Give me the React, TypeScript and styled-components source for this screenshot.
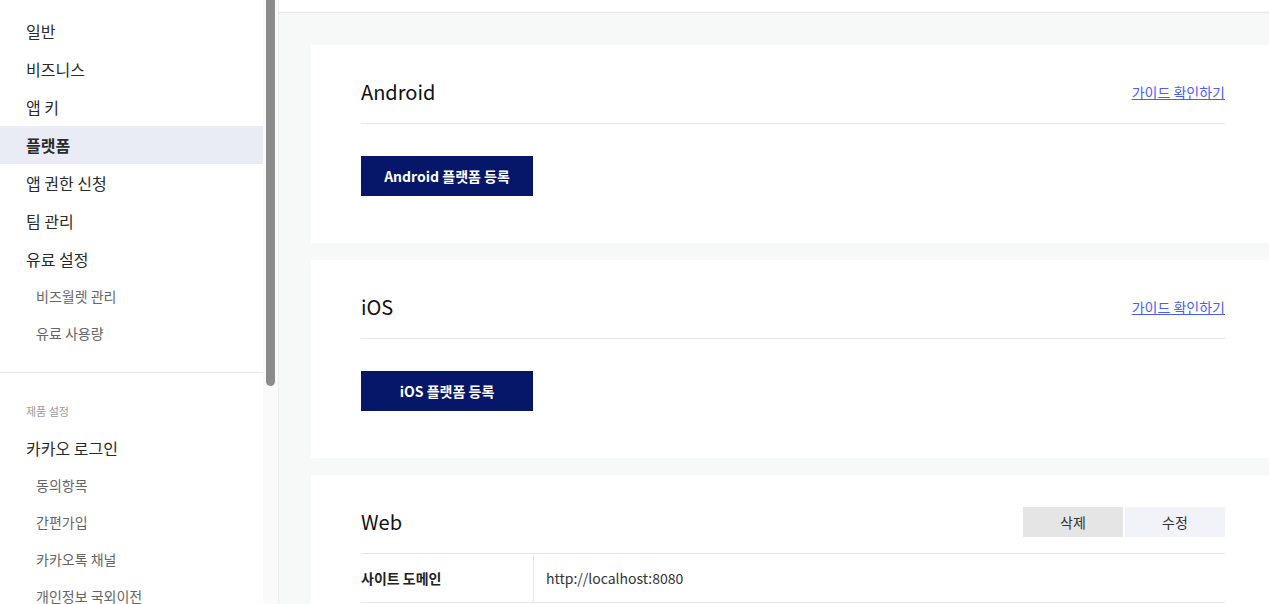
import styled, { createGlobalStyle } from "styled-components";

const GlobalStyle = createGlobalStyle`
  html, body {
    margin: 0;
    padding: 0;
    height: 100%;
    overflow: hidden;
  }
  body {
    font-family: "Noto Sans CJK KR", "Noto Sans", sans-serif;
    color: #222;
    background: #fff;
  }
  * {
    box-sizing: border-box;
  }
`;

const Layout = styled.div`
  display: flex;
  height: 100vh;
  overflow: hidden;
`;

const Sidebar = styled.nav`
  display: flex;
  width: 279px;
  flex-shrink: 0;
  height: 100%;
  overflow: hidden;
  border-right: 1px solid #ececec;
  background: #fff;
`;

const MenuList = styled.div`
  width: 263px;
  flex-shrink: 0;
`;

const ScrollTrack = styled.div`
  width: 15px;
  height: 100%;
  padding: 0 3px;
  background: #fafafa;
`;

const ScrollThumb = styled.div`
  height: 386px;
  background: #8c8c8c;
  border-radius: 0 0 5px 5px;
`;

const MenuGroup = styled.ul`
  list-style: none;
  margin: 0;
  padding: 12px 0 20px;
  border-bottom: 1px solid #e5e5e5;

  &:last-child {
    border-bottom: none;
    padding-top: 27px;
  }
`;

const GroupLabel = styled.li`
  height: 22px;
  line-height: 22px;
  margin-bottom: 7px;
  padding-left: 26px;
  font-size: 11px;
  color: #9a9a9a;
`;

const MenuItem = styled.li<{ $active?: boolean }>`
  height: 38px;
  line-height: 38px;
  padding-left: 26px;
  font-size: 16px;
  color: #2a2a2a;
  font-weight: ${(p) => (p.$active ? 700 : 400)};
  background: ${(p) => (p.$active ? "#e9ecf4" : "transparent")};
`;

const SubItem = styled.li`
  height: 37px;
  line-height: 37px;
  padding-left: 36px;
  font-size: 14px;
  color: #666;
`;

const Main = styled.main`
  flex: 1;
  height: 100%;
  overflow: hidden;
  background: #f7f8f8;
`;

const TopBar = styled.div`
  height: 13px;
  background: #fff;
  border-bottom: 1px solid #e5e5e5;
`;

const Content = styled.div`
  display: flex;
  flex-direction: column;
  gap: 17px;
  padding: 32px 0 0 32px;
`;

const Card = styled.section`
  background: #fff;
  padding: 32px 44px 47px 50px;
`;

const CardHeader = styled.div`
  display: flex;
  align-items: center;
  justify-content: space-between;
  height: 30px;
  padding-bottom: 16px;
  box-sizing: content-box;
  border-bottom: 1px solid #e5e5e5;
`;

const Title = styled.h2`
  margin: 0;
  font-size: 20px;
  font-weight: 400;
  line-height: 30px;
  color: #111;
`;

const GuideLink = styled.a`
  font-size: 14px;
  color: #4a5cff;
  text-decoration: underline;
`;

const PrimaryButton = styled.button`
  display: block;
  margin-top: 32px;
  width: 172px;
  height: 40px;
  border: none;
  background: #061669;
  color: #fff;
  font-family: inherit;
  font-size: 14px;
  font-weight: 700;
`;

const ButtonGroup = styled.div`
  display: flex;
  gap: 2px;
`;

const SmallButton = styled.button<{ $tone: "gray" | "light" }>`
  width: 100px;
  height: 30px;
  border: none;
  background: ${(p) => (p.$tone === "gray" ? "#e5e5e5" : "#f1f3f8")};
  color: #333;
  font-family: inherit;
  font-size: 14px;
`;

const InfoRow = styled.div`
  display: grid;
  grid-template-columns: 173px 1fr;
  height: 49px;
  border-bottom: 1px solid #e5e5e5;
`;

const InfoLabel = styled.div`
  display: flex;
  align-items: center;
  font-size: 14px;
  font-weight: 700;
  color: #222;
  border-right: 1px solid #e5e5e5;
`;

const InfoValue = styled.div`
  display: flex;
  align-items: center;
  padding-left: 12px;
  font-size: 14px;
  color: #333;
`;

const mainMenu = ["일반", "비즈니스", "앱 키", "플랫폼", "앱 권한 신청", "팀 관리", "유료 설정"];
const paidSub = ["비즈월렛 관리", "유료 사용량"];
const loginSub = ["동의항목", "간편가입", "카카오톡 채널", "개인정보 국외이전"];

export default function App() {
  return (
    <>
      <GlobalStyle />
      <Layout>
        <Sidebar>
          <MenuList>
            <MenuGroup>
              {mainMenu.map((m) => (
                <MenuItem key={m} $active={m === "플랫폼"}>
                  {m}
                </MenuItem>
              ))}
              {paidSub.map((s) => (
                <SubItem key={s}>{s}</SubItem>
              ))}
            </MenuGroup>
            <MenuGroup>
              <GroupLabel>제품 설정</GroupLabel>
              <MenuItem>카카오 로그인</MenuItem>
              {loginSub.map((s) => (
                <SubItem key={s}>{s}</SubItem>
              ))}
            </MenuGroup>
          </MenuList>
          <ScrollTrack>
            <ScrollThumb />
          </ScrollTrack>
        </Sidebar>
        <Main>
          <TopBar />
          <Content>
            <Card>
              <CardHeader>
                <Title>Android</Title>
                <GuideLink href="#">가이드 확인하기</GuideLink>
              </CardHeader>
              <PrimaryButton>Android 플랫폼 등록</PrimaryButton>
            </Card>
            <Card>
              <CardHeader>
                <Title>iOS</Title>
                <GuideLink href="#">가이드 확인하기</GuideLink>
              </CardHeader>
              <PrimaryButton>iOS 플랫폼 등록</PrimaryButton>
            </Card>
            <Card>
              <CardHeader>
                <Title>Web</Title>
                <ButtonGroup>
                  <SmallButton $tone="gray">삭제</SmallButton>
                  <SmallButton $tone="light">수정</SmallButton>
                </ButtonGroup>
              </CardHeader>
              <InfoRow>
                <InfoLabel>사이트 도메인</InfoLabel>
                <InfoValue>http://localhost:8080</InfoValue>
              </InfoRow>
            </Card>
          </Content>
        </Main>
      </Layout>
    </>
  );
}
